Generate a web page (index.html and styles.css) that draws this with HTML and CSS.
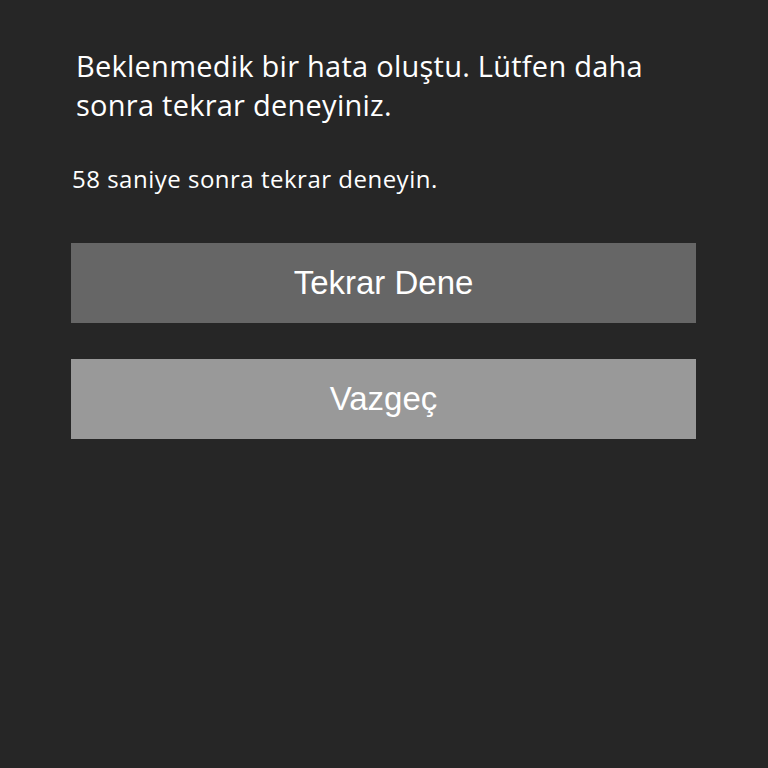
FILE: index.html
```html
<!DOCTYPE html>
<html lang="tr">
<head>
<meta charset="utf-8">
<link rel="stylesheet" href="styles.css">
</head>
<body>
<main class="page">
  <p class="title">Beklenmedik bir hata oluştu. Lütfen daha sonra tekrar deneyiniz.</p>
  <p class="countdown">58 saniye sonra tekrar deneyin.</p>
  <div class="actions">
    <button class="btn btn-primary">Tekrar Dene</button>
    <button class="btn btn-secondary">Vazgeç</button>
  </div>
</main>
</body>
</html>
```
FILE: styles.css
```css
html, body {
  margin: 0;
  padding: 0;
  background: #262626;
  height: 100%;
}
.page {
  padding: 46px 72px 0 71px;
  box-sizing: border-box;
  width: 768px;
}
.title {
  margin: 0 0 0 5px;
  font-family: "Open Sans", sans-serif;
  font-size: 29px;
  letter-spacing: 0.25px;
  line-height: 39px;
  color: #ffffff;
}
.countdown {
  margin: 40px 0 0 1px;
  font-family: "Open Sans", sans-serif;
  font-size: 24px;
  letter-spacing: 0.5px;
  line-height: 30px;
  color: #ffffff;
}
.actions {
  display: flex;
  flex-direction: column;
  gap: 36px;
  margin-top: 49px;
}
.btn {
  display: block;
  width: 100%;
  height: 80px;
  border: none;
  margin: 0;
  padding: 0;
  font-family: "Liberation Sans", Arial, sans-serif;
  font-size: 33px;
  color: #ffffff;
}
.btn-primary { background: #666666; }
.btn-secondary { background: #999999; }
```
